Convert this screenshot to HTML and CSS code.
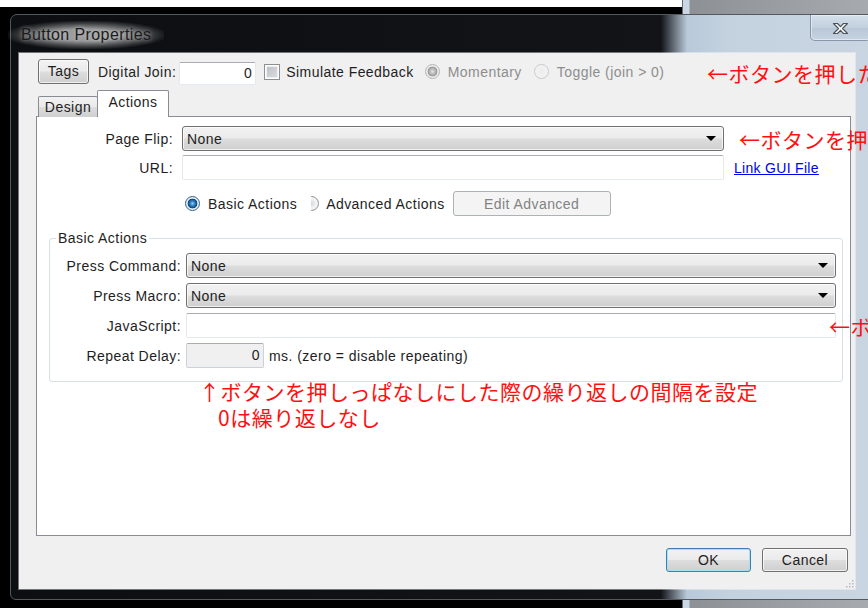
FILE: index.html
```html
<!DOCTYPE html>
<html lang="ja">
<head>
<meta charset="utf-8">
<title>Button Properties</title>
<link rel="stylesheet" href="styles.css">
</head>
<body>
<div class="screen">
  <div class="window">
    <div class="titlebar">
      <span class="title">Button Properties</span>
      <div class="close-btn">
        <svg width="17" height="13" viewBox="0 0 17 13">
          <path d="M1.5 1.5h4l3 3.2 3-3.2h4l-5 5 5 5h-4l-3-3.2-3 3.2h-4l5-5z" fill="#fff" stroke="#4b525c" stroke-width="1.2" stroke-linejoin="round"/>
        </svg>
      </div>
    </div>
    <div class="client">
      <div class="toprow">
        <button class="btn tags">Tags</button>
        <span class="lbl join-lbl">Digital Join:</span>
        <span class="edit join-edit">0</span>
        <span class="check"></span>
        <span class="lbl sim-lbl">Simulate Feedback</span>
        <span class="radio radio-dis-on mom-radio"></span>
        <span class="lbl dis mom-lbl">Momentary</span>
        <span class="radio radio-dis tog-radio"></span>
        <span class="lbl dis">Toggle (join &gt; 0)</span>
      </div>
      <div class="tabs">
        <div class="tab">Design</div>
        <div class="tab active">Actions</div>
      </div>
      <div class="panel">
        <div class="form-grid">
          <span class="lbl right">Page Flip:</span>
          <div class="combo"><span>None</span><i class="arrow"></i></div>
          <span></span>
          <span class="lbl right">URL:</span>
          <div class="edit"></div>
          <span class="link">Link GUI File</span>
          <span></span>
          <div class="radio-row">
            <span class="radio radio-on"></span>
            <span class="lbl basic-lbl">Basic Actions</span>
            <span class="radio radio-off half"></span>
            <span class="lbl adv-lbl">Advanced Actions</span>
            <button class="btn edit-adv">Edit Advanced</button>
          </div>
        </div>
        <fieldset class="group">
          <legend>Basic Actions</legend>
          <div class="group-grid">
            <span class="lbl right">Press Command:</span>
            <div class="combo wide"><span>None</span><i class="arrow"></i></div>
            <span class="lbl right">Press Macro:</span>
            <div class="combo wide"><span>None</span><i class="arrow"></i></div>
            <span class="lbl right">JavaScript:</span>
            <div class="edit wide"></div>
            <span class="lbl right">Repeat Delay:</span>
            <div class="delay-row">
              <span class="edit delay-edit">0</span>
              <span class="lbl ms-lbl">ms. (zero = disable repeating)</span>
            </div>
          </div>
        </fieldset>
      </div>
      <div class="footer">
        <button class="btn ok">OK</button>
        <button class="btn cancel">Cancel</button>
      </div>
      <svg class="grip" width="9" height="9" viewBox="0 0 9 9">
        <g fill="#b9b9b9">
          <rect x="7" y="1" width="1.5" height="1.5"/>
          <rect x="4" y="4" width="1.5" height="1.5"/>
          <rect x="7" y="4" width="1.5" height="1.5"/>
          <rect x="1" y="7" width="1.5" height="1.5"/>
          <rect x="4" y="7" width="1.5" height="1.5"/>
          <rect x="7" y="7" width="1.5" height="1.5"/>
        </g>
      </svg>
    </div>
  </div>

  <div class="note note-join">←ボタンを押した</div>
  <div class="note note-flip">←ボタンを押</div>
  <div class="note note-js">←ボ</div>
  <div class="note note-delay">↑ボタンを押しっぱなしにした際の繰り返しの間隔を設定<br><span class="indent">0は繰り返しなし</span></div>
</div>
</body>
</html>
```

FILE: styles.css
```css
* { box-sizing: border-box; }

html, body {
  margin: 0;
  padding: 0;
}

body {
  width: 868px;
  height: 608px;
  overflow: hidden;
  font-family: "Liberation Sans", Arial, sans-serif;
}

/* desktop behind the dialog */
.screen {
  position: relative;
  width: 868px;
  height: 608px;
  overflow: hidden;
  padding: 14px 0 0 10px;
  background:
    linear-gradient(#ffffff, #ffffff) 0 0 / 682px 7px no-repeat,
    linear-gradient(to right, #000 0, #000 682px, #c9d6e3 683px, #c9d6e3 689px, #8d9095 690px, #a7aaae 100%);
}

/* aero glass frame */
.window {
  width: 866px;
  height: 586px;
  border: 1px solid #55595e;
  border-radius: 7px 7px 6px 6px;
  padding: 0 19px 9px 7px;
  display: flex;
  flex-direction: column;
  background: linear-gradient(to right, #0c0e11 0, #121418 650px, #b9c9d9 676px, #c4d2e0 720px, #c9d5e1 100%);
}

.titlebar {
  height: 37px;
  display: flex;
  align-items: flex-start;
  flex: none;
}

/* soft light glow behind the caption */
.title {
  align-self: center;
  margin: 2px 0 0 -10px;
  padding: 5px 13px;
  font-size: 16px;
  letter-spacing: 0.4px;
  color: #1b1b1b;
  background: radial-gradient(ellipse at center, rgba(200, 200, 200, 0.75) 30%, rgba(140, 140, 140, 0.35) 60%, rgba(40, 40, 40, 0) 75%);
  text-shadow: 0 0 4px rgba(255, 255, 255, 0.5);
}

.close-btn {
  margin-left: auto;
  margin-right: -15px;
  width: 61px;
  height: 26px;
  border: 1px solid #8796a8;
  border-top: none;
  border-radius: 0 0 5px 5px;
  background: linear-gradient(#d5e0ea, #c2d0de 50%, #b8c7d7 51%, #c6d3e0);
  box-shadow: inset 0 0 0 1px rgba(255, 255, 255, 0.45);
  display: flex;
  align-items: center;
  justify-content: center;
}

.close-btn svg { margin-top: 1px; }

.client {
  position: relative;
  flex: 1;
  background: #f0f0f0;
  background-clip: padding-box;
  border: 1px solid rgba(255, 255, 255, 0.42);
  padding: 6px 4px 0 17px;
  display: flex;
  flex-direction: column;
  font-size: 14px;
  letter-spacing: 0.45px;
  color: #1e1e1e;
}

.lbl { white-space: nowrap; }
.lbl.right { text-align: right; }
.lbl.dis { color: #8d8d8d; }

/* ---- generic controls ---- */
.btn {
  font: inherit;
  letter-spacing: inherit;
  color: #1e1e1e;
  height: 25px;
  padding: 0;
  border: 1px solid #707070;
  border-radius: 3px;
  background: linear-gradient(#f2f2f2, #ebebeb 48%, #dddddd 52%, #cfcfcf);
  box-shadow: inset 0 0 0 1px rgba(255, 255, 255, 0.7);
}

.edit {
  display: block;
  height: 25px;
  background: #fff;
  border: 1px solid #e3e9ef;
  border-top-color: #abadb3;
  border-radius: 2px;
}

.combo {
  height: 25px;
  display: flex;
  align-items: center;
  padding: 0 7px 0 4px;
  border: 1px solid #707070;
  border-radius: 3px;
  background: linear-gradient(#f2f2f2, #ebebeb 48%, #dddddd 52%, #cfcfcf);
  box-shadow: inset 0 0 0 1px rgba(255, 255, 255, 0.7);
}

.combo span { flex: 1; }

.arrow {
  width: 0;
  height: 0;
  border-left: 5px solid transparent;
  border-right: 5px solid transparent;
  border-top: 5px solid #000;
}

.radio {
  flex: none;
  width: 15px;
  height: 15px;
  border-radius: 50%;
}

.radio-on {
  border: 1px solid #2c628b;
  background: radial-gradient(circle, #9fd4f9 0, #3d95d6 1.7px, #1a5a96 3.8px, #0f3f72 4.6px, #e9eef2 5.2px, #f7f7f7 100%);
}

.radio-off {
  border: 1px solid #8e8f8f;
  background: radial-gradient(circle, #d5d8dc 0, #eef0f2 4px, #fafafa 100%);
}

.radio-dis-on {
  border: 1px solid #b5b5b5;
  background: radial-gradient(circle, #e4e4e4 0, #a8a8a8 3.8px, #939393 4.6px, #eaeaea 5.2px, #f6f6f6 100%);
}

.radio-dis {
  border: 1px solid #c9c9c9;
  background: radial-gradient(circle, #ececec 0, #f6f6f6 100%);
}

.half { clip-path: inset(0 0 0 45%); }

.check {
  flex: none;
  width: 16px;
  height: 16px;
  border: 1px solid #8e8f8f;
  padding: 2px;
  background: #f4f4f4;
  background-image: linear-gradient(135deg, #b9bcc1, #dfe1e4);
  background-clip: content-box;
  box-shadow: inset 0 0 0 1px #fdfdfd;
}

/* ---- top row ---- */
.toprow {
  height: 25px;
  margin-left: 2px;
  display: flex;
  align-items: center;
  flex: none;
}

.tags { width: 51px; margin-top: -1px; }
.join-lbl { margin-left: 9px; }
.join-edit {
  margin-left: 3px;
  width: 77px;
  height: 23px;
  text-align: right;
  padding: 2px 3px 0 0;
  margin-top: 3px;
}
.check { margin-left: 8px; margin-top: 1px; }
.sim-lbl { margin-left: 6px; }
.mom-radio { margin-left: 11px; }
.mom-lbl { margin-left: 8px; }
.tog-radio { margin-left: 12px; }
.tog-radio + .lbl { margin-left: 8px; }

/* ---- tabs ---- */
.tabs {
  margin: 6px 0 -1px 2px;
  height: 27px;
  display: flex;
  align-items: flex-end;
  flex: none;
  position: relative;
  z-index: 1;
}

.tab {
  height: 21px;
  width: 60px;
  border: 1px solid #898c95;
  border-bottom: none;
  border-radius: 2px 2px 0 0;
  background: linear-gradient(#f2f2f2, #ebebeb 50%, #dddddd 51%, #cfcfcf);
  text-align: center;
  line-height: 21px;
}

.tab.active {
  height: 27px;
  width: 72px;
  margin-left: -1px;
  background: #ffffff;
  line-height: 22px;
}

/* ---- tab page ---- */
.panel {
  flex: 1;
  background: #fff;
  border: 1px solid #898c95;
  padding-top: 9px;
}

.form-grid {
  display: grid;
  grid-template-columns: 136px 542px auto;
  column-gap: 9px;
  row-gap: 4px;
  align-items: center;
}

.link {
  margin-left: 1px;
  color: #0000ee;
  text-decoration: underline;
  letter-spacing: 0.3px;
}

.radio-row {
  grid-column: 2 / 4;
  margin-top: 7px;
  display: flex;
  align-items: center;
}

.radio-row .radio-on { margin-left: 3px; }
.basic-lbl { margin-left: 8px; }
.radio-row .half { margin-left: 7px; }
.adv-lbl { margin-left: 7px; }

.edit-adv {
  margin-left: 8px;
  width: 158px;
  color: #838383;
  border-color: #adb2b5;
  background: #f4f4f4;
  box-shadow: none;
}

.group {
  margin: 14px 7px 0 12px;
  padding: 0 6px 13px 0;
  border: 1px solid #d5dfe5;
  border-radius: 3px;
  min-width: 0;
}

.group legend {
  margin-left: 6px;
  padding: 0 2px;
}

.group-grid {
  display: grid;
  grid-template-columns: 131px 1fr;
  column-gap: 5px;
  row-gap: 5px;
  align-items: center;
  margin-top: 7px;
}

.delay-row {
  display: flex;
  align-items: center;
}

.delay-edit {
  width: 78px;
  background: #f0f0f0;
  border-color: #ccd2d8;
  border-top-color: #abadb3;
  text-align: right;
  padding: 3px 3px 0 0;
}

.ms-lbl { margin-left: 5px; }

/* ---- dialog buttons ---- */
.footer {
  flex: none;
  display: flex;
  justify-content: flex-end;
  gap: 11px;
  margin: 12px 3px 0 0;
  height: 41px;
}

.footer .btn { width: 85px; height: 24px; }
.footer .cancel { width: 86px; }

.ok {
  border-color: #3c7fb1;
  box-shadow: inset 0 0 0 1px #a7def8;
}

.grip {
  position: absolute;
  right: 1px;
  bottom: 1px;
}

/* ---- red notes ---- */
.note {
  position: absolute;
  color: #ff1010;
  font-family: "Noto Sans CJK JP", sans-serif;
  font-size: 21px;
  letter-spacing: 0.5px;
  line-height: 26px;
  white-space: nowrap;
}

.note-join { left: 707px; top: 60px; }
.note-flip { left: 739px; top: 126px; }
.note-js { left: 829px; top: 313px; }
.note-delay { left: 199px; top: 378px; }
.note-delay .indent { margin-left: 19px; }
```
